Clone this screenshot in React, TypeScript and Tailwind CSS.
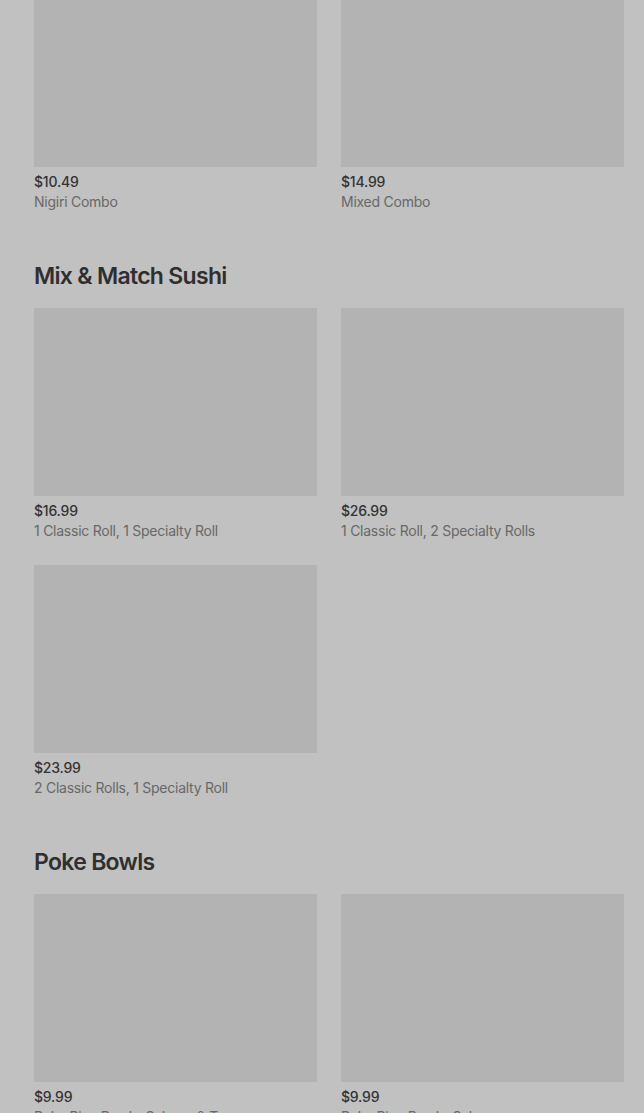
import React from "react";

type Item = { price: string; name: string };

const sections: { title?: string; items: Item[] }[] = [
  {
    items: [
      { price: "$10.49", name: "Nigiri Combo" },
      { price: "$14.99", name: "Mixed Combo" },
    ],
  },
  {
    title: "Mix & Match Sushi",
    items: [
      { price: "$16.99", name: "1 Classic Roll, 1 Specialty Roll" },
      { price: "$26.99", name: "1 Classic Roll, 2 Specialty Rolls" },
      { price: "$23.99", name: "2 Classic Rolls, 1 Specialty Roll" },
    ],
  },
  {
    title: "Poke Bowls",
    items: [
      { price: "$9.99", name: "Poke Rice Bowl - Salmon & Tuna" },
      { price: "$9.99", name: "Poke Rice Bowl - Salmon" },
    ],
  },
];

function MenuCard({ item }: { item: Item }) {
  return (
    <div className="flex flex-col">
      <div className="h-[188px] w-full bg-[#b3b3b3]" />
      <div className="mt-[5px] text-[14px] leading-5 font-medium tracking-[-0.2px] text-[#333333]">
        {item.price}
      </div>
      <div className="text-[14px] leading-5 tracking-[-0.25px] text-[#686868]">{item.name}</div>
    </div>
  );
}

export default function App() {
  return (
    <div
      className="h-[1113px] w-full overflow-hidden bg-[#c1c1c1] pl-[34px] pr-[20px]"
      style={{ fontFamily: "Inter, 'Noto Sans', sans-serif" }}
    >
      <div className="-mt-[21px] flex flex-col gap-12">
        {sections.map((section, i) => (
          <section key={i}>
            {section.title && (
              <h2 className="mb-4 text-[23px] leading-8 font-semibold tracking-[-0.7px] text-[#2f2f2f]">
                {section.title}
              </h2>
            )}
            <div className="grid grid-cols-2 gap-x-6 gap-y-6">
              {section.items.map((item, j) => (
                <MenuCard key={j} item={item} />
              ))}
            </div>
          </section>
        ))}
      </div>
    </div>
  );
}
